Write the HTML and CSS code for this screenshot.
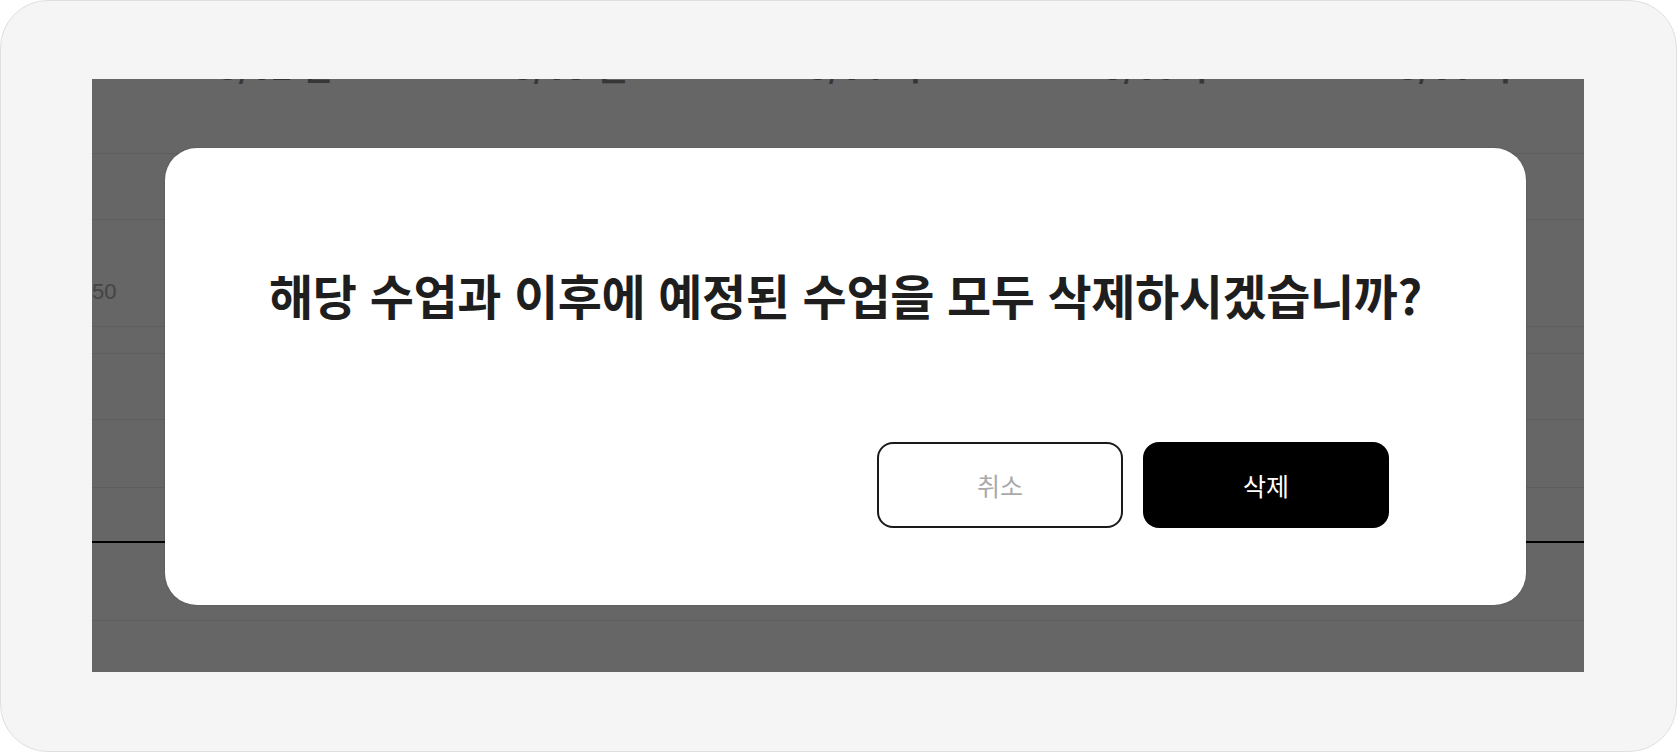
FILE: index.html
```html
<!DOCTYPE html>
<html lang="ko">
<head>
  <meta charset="UTF-8" />
  <title>수업 삭제</title>
  <link rel="stylesheet" href="styles.css">
</head>
<body>
  <div class="frame">
    <div class="screen">
      <div class="sheet">
        <div class="row head">
          <span></span>
          <span>3/02 일</span>
          <span>3/03 월</span>
          <span>3/04 화</span>
          <span>3/05 수</span>
          <span>3/06 목</span>
        </div>
        <div class="row r1"></div>
        <div class="row r2"><span class="num">50</span></div>
        <div class="row r3"></div>
        <div class="row r4"></div>
        <div class="row r5"></div>
        <div class="row r6 strong"></div>
        <div class="row r7"></div>
        <div class="row r8"></div>
      </div>

      <div class="overlay">
        <div class="modal">
          <h2 class="modal-title">해당 수업과 이후에 예정된 수업을 모두 삭제하시겠습니까?</h2>
          <div class="actions">
            <button class="btn cancel">취소</button>
            <button class="btn danger">삭제</button>
          </div>
        </div>
      </div>
    </div>
  </div>
</body>
</html>
```

FILE: styles.css
```css
html,
body {
  margin: 0;
  background-color: #fff;
  font-family: 'Noto Sans CJK KR', 'Noto Sans', sans-serif;
}
.frame {
  height: 752px;
  box-sizing: border-box;
  background-color: #f5f5f5;
  border: 1px solid #e0e0e0;
  border-radius: 48px;
  padding: 78px 92px 79px 91px;
}
.screen {
  position: relative;
  height: 100%;
  overflow: hidden;
  background-color: #fff;
}
.sheet {
  margin-top: -48px;
}
.row {
  border-bottom: 1px solid #ebebeb;
  box-sizing: border-box;
}
.row.head {
  display: grid;
  grid-template-columns: 36px repeat(5, 295px);
  height: 123px;
  align-items: end;
  padding-bottom: 70px;
  font-size: 34px;
  font-weight: 700;
  color: #888;
  text-align: center;
}
.row.head span {
  line-height: 1;
}
.r1 { height: 66px; }
.r2 {
  height: 107px;
  display: flex;
  align-items: center;
  padding-top: 38px;
}
.r3 { height: 27px; }
.r4 { height: 66px; }
.r5 { height: 68px; }
.r6 { height: 55px; }
.r6.strong { border-bottom: 2px solid #000; }
.r7 { height: 78px; }
.r8 { height: 80px; border-bottom: none; }
.num {
  font-family: 'Liberation Sans', sans-serif;
  font-size: 22px;
  color: #aaa;
}
.overlay {
  position: absolute;
  inset: 0;
  background-color: rgba(0, 0, 0, 0.6);
  display: flex;
  align-items: flex-start;
  padding: 69px 58px 0 73px;
}
.modal {
  flex: 1;
  background-color: #fff;
  border-radius: 32px;
  padding: 118px 0 77px;
  box-shadow: 0 0 2px rgba(0, 0, 0, 0.2);
}
.modal-title {
  margin: 0 0 119px;
  text-align: center;
  font-size: 48px;
  line-height: 57px;
  font-weight: 700;
  letter-spacing: -0.4px;
  white-space: nowrap;
  color: #1e1e1e;
}
.actions {
  display: flex;
  justify-content: flex-end;
  gap: 20px;
  padding-right: 137px;
}
.btn {
  width: 246px;
  height: 86px;
  border-radius: 16px;
  font-family: inherit;
  font-size: 25px;
  font-weight: 400;
  cursor: pointer;
  box-sizing: border-box;
}
.btn.cancel {
  background-color: #fff;
  border: 2px solid #1a1a1a;
  color: #aaa;
}
.btn.danger {
  background-color: #000;
  border: none;
  color: #fff;
}
```
